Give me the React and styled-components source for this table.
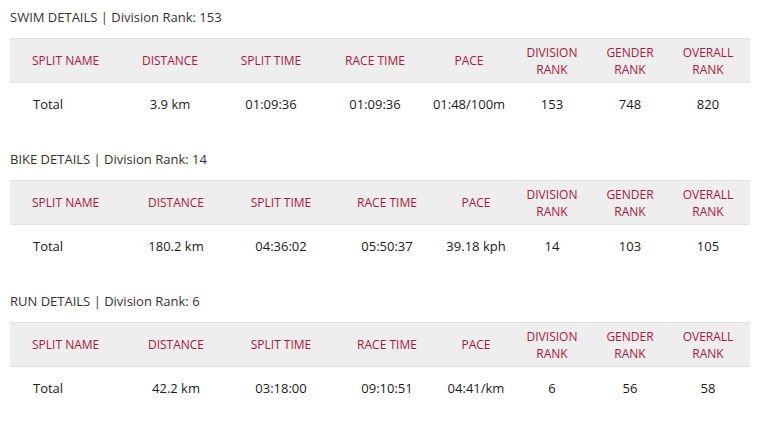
import styled, { createGlobalStyle } from "styled-components";

const sections = [
  {
    name: "SWIM DETAILS",
    rank: 153,
    widths: [110, 100, 102, 106, 82, 84, 72, 84],
    row: ["Total", "3.9 km", "01:09:36", "01:09:36", "01:48/100m", "153", "748", "820"],
  },
  {
    name: "BIKE DETAILS",
    rank: 14,
    widths: [112, 108, 102, 110, 68, 84, 72, 84],
    row: ["Total", "180.2 km", "04:36:02", "05:50:37", "39.18 kph", "14", "103", "105"],
  },
  {
    name: "RUN DETAILS",
    rank: 6,
    widths: [112, 108, 102, 110, 68, 84, 72, 84],
    row: ["Total", "42.2 km", "03:18:00", "09:10:51", "04:41/km", "6", "56", "58"],
  },
];

const headers = [
  ["SPLIT NAME"],
  ["DISTANCE"],
  ["SPLIT TIME"],
  ["RACE TIME"],
  ["PACE"],
  ["DIVISION", "RANK"],
  ["GENDER", "RANK"],
  ["OVERALL", "RANK"],
];

function App() {
  return (
    <>
      <GlobalStyle />
      <Page>
        {sections.map((s) => (
          <Section key={s.name}>
            <Title>
              {s.name} | Division Rank: {s.rank}
            </Title>
            <Table>
              <colgroup>
                {s.widths.map((w, i) => (
                  <Col key={i} $w={w} />
                ))}
              </colgroup>
              <thead>
                <tr>
                  {headers.map((h, i) => (
                    <Th key={i} $first={i === 0}>
                      {h.map((line, j) => (
                        <Line key={j}>{line}</Line>
                      ))}
                    </Th>
                  ))}
                </tr>
              </thead>
              <tbody>
                <tr>
                  {s.row.map((v, i) => (
                    <Td key={i} $first={i === 0}>
                      {v}
                    </Td>
                  ))}
                </tr>
              </tbody>
            </Table>
          </Section>
        ))}
      </Page>
    </>
  );
}

const GlobalStyle = createGlobalStyle`
  body {
    margin: 0;
    background: #ffffff;
    font-family: "Open Sans", "Noto Sans", sans-serif;
    color: #222222;
  }
`;

const Page = styled.div`
  padding: 8px 9px 0 10px;
`;

const Section = styled.section`
  margin-bottom: 25px;
`;

const Title = styled.div`
  font-size: 13px;
  line-height: 18px;
  color: #333333;
  margin-bottom: 12px;
`;

const Table = styled.table`
  width: 740px;
  border-collapse: collapse;
  table-layout: fixed;
`;

const Col = styled.col`
  width: ${(p) => p.$w}px;
`;

const Th = styled.th`
  height: 43px;
  padding: 0;
  padding-left: ${(p) => (p.$first ? "22px" : "0")};
  background: #efeeee;
  border-top: 1px solid #e2e0e0;
  border-bottom: 1px solid #e2e0e0;
  color: #ac173d;
  font-size: 12px;
  font-weight: 400;
  line-height: 17px;
  text-align: ${(p) => (p.$first ? "left" : "center")};
  vertical-align: middle;
`;

const Line = styled.div``;

const Td = styled.td`
  height: 42px;
  padding: 0;
  padding-left: ${(p) => (p.$first ? "23px" : "0")};
  font-size: 13px;
  font-weight: 500;
  color: #1a1a1a;
  text-align: ${(p) => (p.$first ? "left" : "center")};
  vertical-align: middle;
`;

export default App;
